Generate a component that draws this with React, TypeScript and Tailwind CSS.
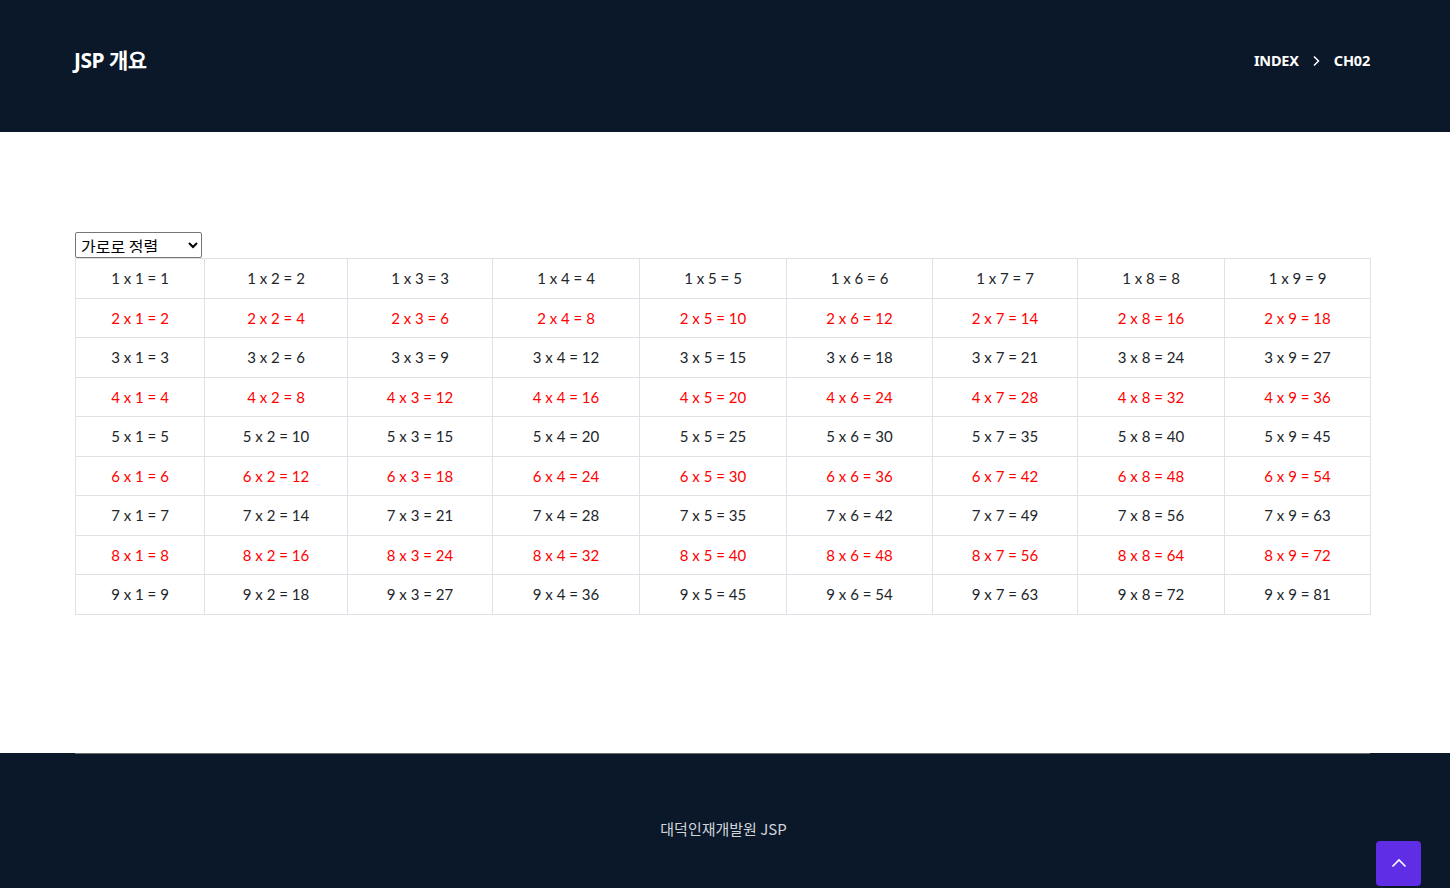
import React from "react";

const widths = [129, 143, 145, 147, 147, 146, 145, 147, 146];
const rows = [1, 2, 3, 4, 5, 6, 7, 8, 9];

const Header: React.FC = () => (
  <header className="h-[132px] bg-[#0a1829] flex items-center justify-between pl-[74px] pr-[80px] text-white">
    <div className="text-[21px] font-bold tracking-tight -mt-[11px]" style={{ fontFamily: '"Noto Sans", "Noto Sans CJK KR", sans-serif' }}>
      JSP 개요
    </div>
    <nav className="flex items-center gap-[13px] text-[14.5px] font-bold -mt-[10px] tracking-[-0.2px]" style={{ fontFamily: '"Noto Sans", sans-serif' }}>
      <span>INDEX</span>
      <svg width="9" height="12" viewBox="0 0 9 12" fill="none" stroke="white" strokeWidth="1.5">
        <path d="M2 1.5 L6.5 6 L2 10.5" />
      </svg>
      <span>CH02</span>
    </nav>
  </header>
);

const Gugudan: React.FC = () => (
  <div className="px-[75px] pt-[100px] pb-[138px]">
    <select className="h-[26px] w-[127px] border border-[#767676] rounded-[2px] text-[16px] pl-[1px] pb-[4px] text-black block bg-white" style={{ fontFamily: '"Noto Sans CJK KR", sans-serif' }}>
      <option>가로로 정렬</option>
      <option>세로로 정렬</option>
    </select>
    <table className="border-collapse w-[1295px] table-fixed text-[15px]" style={{ fontFamily: 'Lato, sans-serif' }}>
      <colgroup>
        {widths.map((w, i) => (
          <col key={i} style={{ width: w }} />
        ))}
      </colgroup>
      <tbody>
        {rows.map((r) => (
          <tr key={r} className={r % 2 === 0 ? "text-[#ff0000]" : "text-[#212529]"}>
            {rows.map((c) => (
              <td key={c} className="border border-[#dee2e6] h-[39.5px] text-center align-middle p-0">
                {r} x {c} = {r * c}
              </td>
            ))}
          </tr>
        ))}
      </tbody>
    </table>
  </div>
);

const Footer: React.FC = () => (
  <footer className="bg-[#0a1829] h-[135px]">
    <div className="ml-[75px] mr-[80px] border-t border-[#6b6b6b] h-full flex justify-center pt-[64px] pl-[2px]">
      <span className="text-[15px] text-[#d0d4da]" style={{ fontFamily: '"Noto Sans CJK KR", sans-serif' }}>
        대덕인재개발원 JSP
      </span>
    </div>
  </footer>
);

export default function App() {
  return (
    <div className="w-[1450px] bg-white relative">
      <Header />
      <Gugudan />
      <Footer />
      <button className="absolute right-[29px] bottom-[2px] w-[45px] h-[45px] rounded-[4px] bg-[#5f2de6] flex items-center justify-center">
        <svg width="16" height="10" viewBox="0 0 16 10" fill="none" stroke="white" strokeWidth="1.6">
          <path d="M1.5 8.5 L8 2 L14.5 8.5" />
        </svg>
      </button>
    </div>
  );
}
